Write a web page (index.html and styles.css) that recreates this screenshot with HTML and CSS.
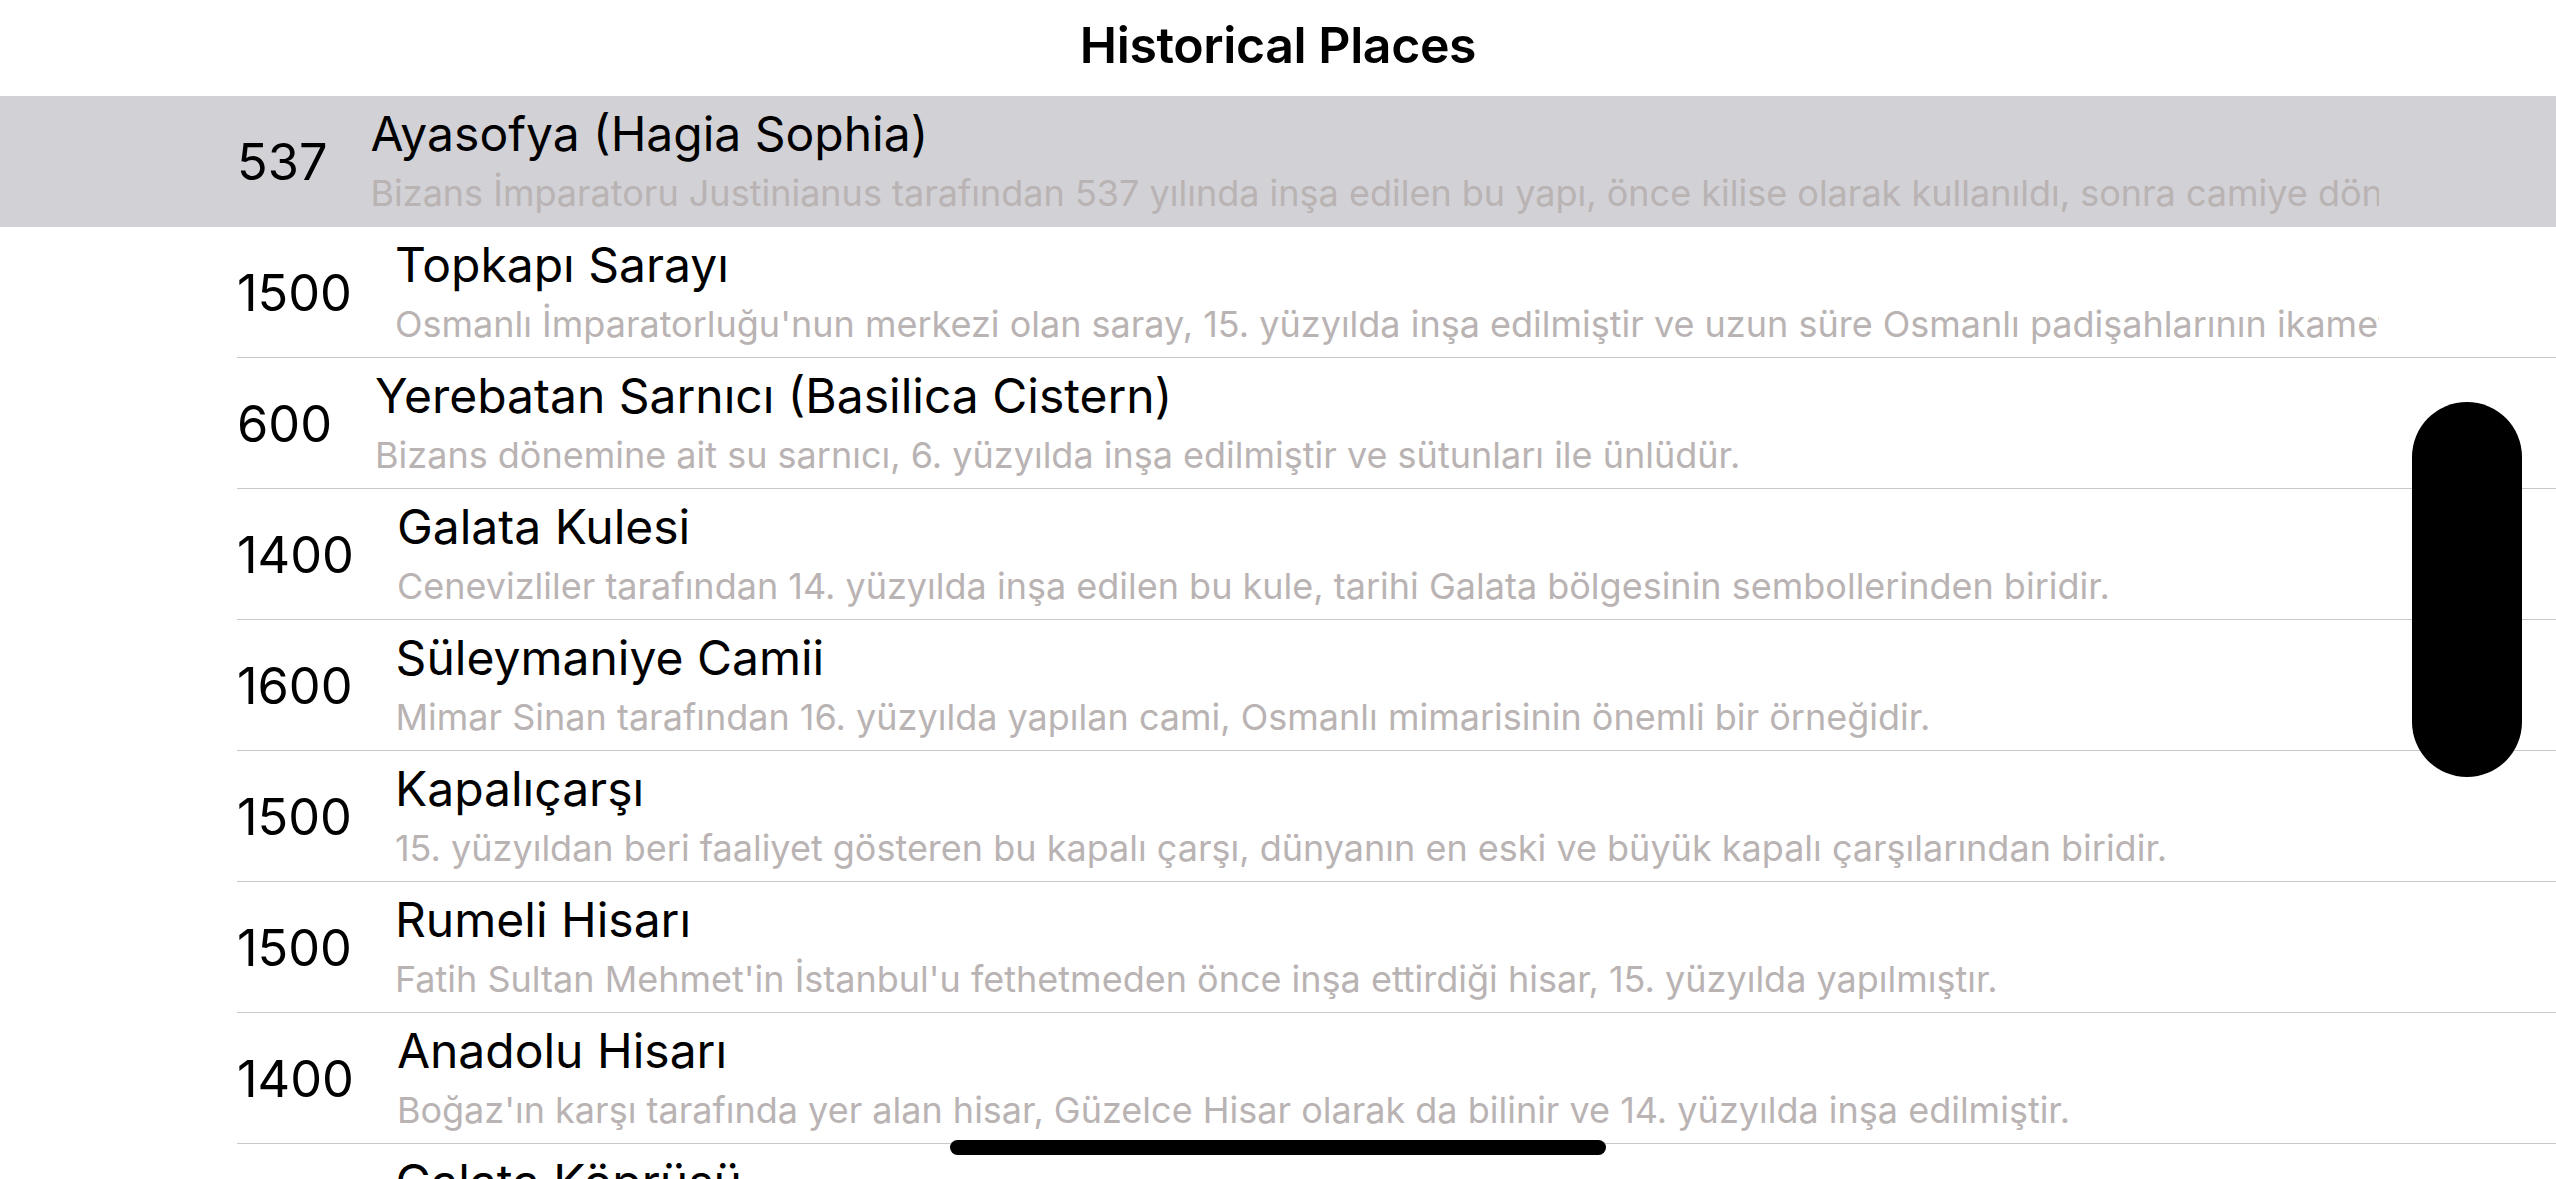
FILE: index.html
```html
<!DOCTYPE html>
<html lang="tr">
<head>
<meta charset="utf-8">
<title>Historical Places</title>
<link rel="stylesheet" href="styles.css">
</head>
<body>
<div class="screen">
  <header class="nav">
    <h1 class="nav-title">Historical Places</h1>
  </header>
  <ul class="list">
    <li class="row selected">
      <div class="row-body">
        <span class="year">537</span>
        <div class="info">
          <div class="name">Ayasofya (Hagia Sophia)</div>
          <div class="desc">Bizans İmparatoru Justinianus tarafından 537 yılında inşa edilen bu yapı, önce kilise olarak kullanıldı, sonra camiye dönüştürüldü ve bugün müze olarak hizmet vermektedir.</div>
        </div>
      </div>
    </li>
    <li class="row">
      <div class="row-body">
        <span class="year">1500</span>
        <div class="info">
          <div class="name">Topkapı Sarayı</div>
          <div class="desc">Osmanlı İmparatorluğu'nun merkezi olan saray, 15. yüzyılda inşa edilmiştir ve uzun süre Osmanlı padişahlarının ikamet yeri olarak kullanılmıştır.</div>
        </div>
      </div>
    </li>
    <li class="row">
      <div class="row-body">
        <span class="year">600</span>
        <div class="info">
          <div class="name">Yerebatan Sarnıcı (Basilica Cistern)</div>
          <div class="desc">Bizans dönemine ait su sarnıcı, 6. yüzyılda inşa edilmiştir ve sütunları ile ünlüdür.</div>
        </div>
      </div>
    </li>
    <li class="row">
      <div class="row-body">
        <span class="year">1400</span>
        <div class="info">
          <div class="name">Galata Kulesi</div>
          <div class="desc">Cenevizliler tarafından 14. yüzyılda inşa edilen bu kule, tarihi Galata bölgesinin sembollerinden biridir.</div>
        </div>
      </div>
    </li>
    <li class="row">
      <div class="row-body">
        <span class="year">1600</span>
        <div class="info">
          <div class="name">Süleymaniye Camii</div>
          <div class="desc">Mimar Sinan tarafından 16. yüzyılda yapılan cami, Osmanlı mimarisinin önemli bir örneğidir.</div>
        </div>
      </div>
    </li>
    <li class="row">
      <div class="row-body">
        <span class="year">1500</span>
        <div class="info">
          <div class="name">Kapalıçarşı</div>
          <div class="desc">15. yüzyıldan beri faaliyet gösteren bu kapalı çarşı, dünyanın en eski ve büyük kapalı çarşılarından biridir.</div>
        </div>
      </div>
    </li>
    <li class="row">
      <div class="row-body">
        <span class="year">1500</span>
        <div class="info">
          <div class="name">Rumeli Hisarı</div>
          <div class="desc">Fatih Sultan Mehmet'in İstanbul'u fethetmeden önce inşa ettirdiği hisar, 15. yüzyılda yapılmıştır.</div>
        </div>
      </div>
    </li>
    <li class="row">
      <div class="row-body">
        <span class="year">1400</span>
        <div class="info">
          <div class="name">Anadolu Hisarı</div>
          <div class="desc">Boğaz'ın karşı tarafında yer alan hisar, Güzelce Hisar olarak da bilinir ve 14. yüzyılda inşa edilmiştir.</div>
        </div>
      </div>
    </li>
    <li class="row">
      <div class="row-body">
        <span class="year">1800</span>
        <div class="info">
          <div class="name">Galata Köprüsü</div>
          <div class="desc">Haliç üzerinde yer alan köprü, Karaköy ile Eminönü'nü birbirine bağlar.</div>
        </div>
      </div>
    </li>
  </ul>
  <div class="scroll-thumb"></div>
  <div class="home-indicator"></div>
</div>
</body>
</html>
```
FILE: styles.css
```css
html, body {
  margin: 0;
  padding: 0;
  background: #ffffff;
}

body {
  font-family: "Inter", "Noto Sans", "Liberation Sans", sans-serif;
  color: #000000;
}

.screen {
  position: relative;
  width: 2556px;
  height: 1179px;
  overflow: hidden;
  background: #ffffff;
}

.nav {
  height: 96px;
  display: flex;
  align-items: center;
  justify-content: center;
}

.nav-title {
  margin: 0;
  font-size: 50px;
  font-weight: 600;
  letter-spacing: -0.4px;
  padding-bottom: 6px;
}

.list {
  list-style: none;
  margin: 0;
  padding: 0;
}

.row {
  padding-left: 237px;
}

.row.selected {
  background: #d1d1d6;
}

.row-body {
  height: 131px;
  box-sizing: border-box;
  border-bottom: 1px solid #c8c7cc;
  display: flex;
  align-items: center;
  gap: 43px;
  padding-right: 177px;
}

.row.selected .row-body {
  border-bottom-color: transparent;
}

.year {
  font-size: 50.5px;
  font-weight: 400;
  white-space: nowrap;
  flex: none;
}

.info {
  flex: 1;
  min-width: 0;
  overflow: hidden;
  display: flex;
  flex-direction: column;
  gap: 9px;
  padding-bottom: 4px;
}

.name {
  font-size: 48px;
  line-height: 58px;
  white-space: nowrap;
}

.desc {
  font-size: 36px;
  line-height: 42px;
  color: #b9b3b3;
  white-space: nowrap;
  overflow: hidden;
  text-overflow: clip;
}

.scroll-thumb {
  position: absolute;
  left: 2412px;
  top: 402px;
  width: 110px;
  height: 375px;
  border-radius: 55px;
  background: #000000;
}

.home-indicator {
  position: absolute;
  left: 950px;
  top: 1140px;
  width: 656px;
  height: 15px;
  border-radius: 8px;
  background: #000000;
}
```
